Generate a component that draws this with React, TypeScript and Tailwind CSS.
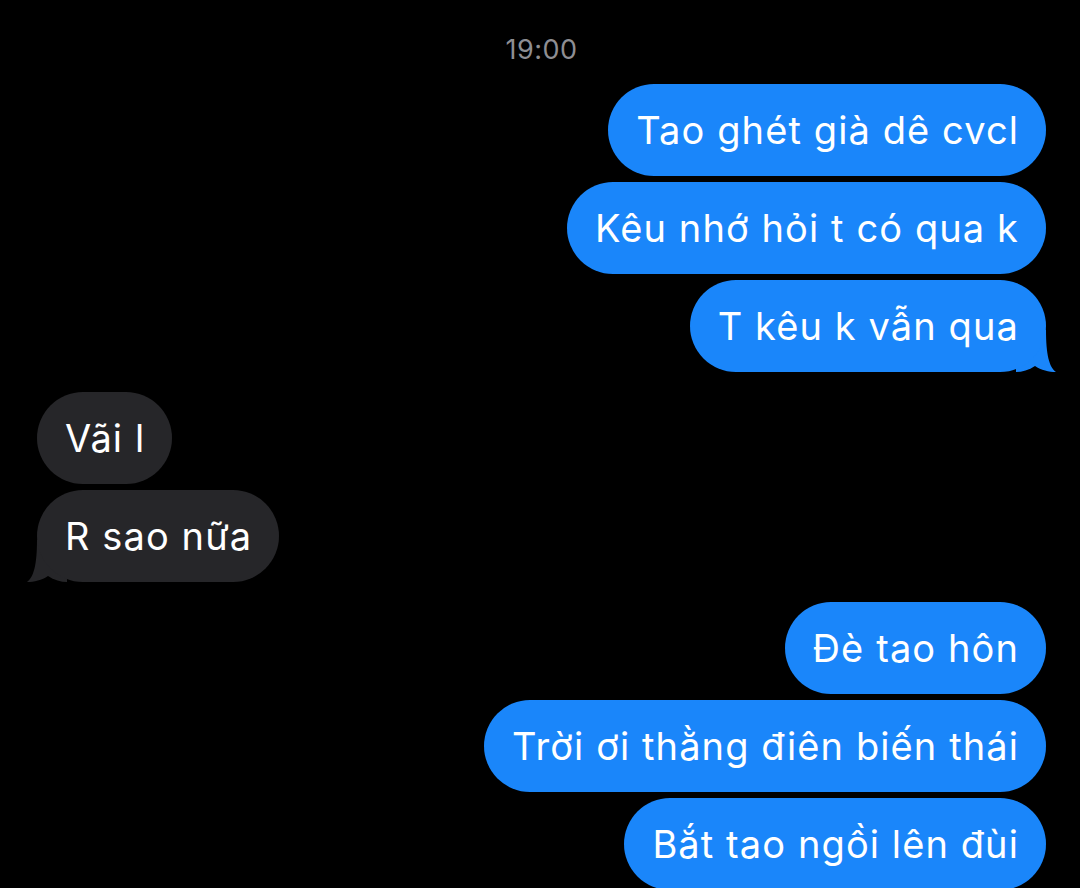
import React from "react";

type Msg = { text: string; tail?: boolean };

const BLUE = "#1a86fa";
const GRAY = "#262629";

// đuôi bong bóng kiểu iMessage
function Tail({ side, color }: { side: "left" | "right"; color: string }) {
  return (
    <svg
      width="42"
      height="42"
      viewBox="0 0 42 42"
      className={
        side === "right"
          ? "absolute bottom-0 -right-[12px]"
          : "absolute bottom-0 -left-[12px] -scale-x-100"
      }
    >
      <path d="M30 0 C30 24 33 37 40 42 C33 42 25 40 19 36 C13 40 6 42 0 42 L0 0 Z" fill={color} />
    </svg>
  );
}

function Bubble({ text, tail, side }: Msg & { side: "left" | "right" }) {
  const color = side === "right" ? BLUE : GRAY;
  return (
    <div className="relative">
      {tail && <Tail side={side} color={color} />}
      <div
        className={`relative rounded-[46px] pl-7 pr-[27px] py-6 text-[38px] leading-[44px] tracking-[1.1px] text-white ${
          side === "right" ? "bg-[#1a86fa]" : "bg-[#262629]"
        }`}
      >
        {text}
      </div>
    </div>
  );
}

function Group({ side, messages }: { side: "left" | "right"; messages: Msg[] }) {
  return (
    <div className={`flex flex-col gap-[6px] ${side === "right" ? "items-end" : "items-start"}`}>
      {messages.map((m, i) => (
        <Bubble key={i} {...m} side={side} />
      ))}
    </div>
  );
}

export default function App() {
  return (
    <div
      className="h-[888px] w-[1080px] overflow-hidden bg-black pl-[37px] pr-[34px] pt-[35px]"
      style={{ fontFamily: "Inter, 'Noto Sans', sans-serif" }}
    >
      <div className="text-center text-[27px] leading-[30px] tracking-[0.5px] text-[#8e8e93]">19:00</div>
      <div className="mt-[19px] flex flex-col gap-[20px]">
        <Group
          side="right"
          messages={[
            { text: "Tao ghét già dê cvcl" },
            { text: "Kêu nhớ hỏi t có qua k" },
            { text: "T kêu k vẫn qua", tail: true },
          ]}
        />
        <Group side="left" messages={[{ text: "Vãi l" }, { text: "R sao nữa", tail: true }]} />
        <Group
          side="right"
          messages={[
            { text: "Đè tao hôn" },
            { text: "Trời ơi thằng điên biến thái" },
            { text: "Bắt tao ngồi lên đùi" },
          ]}
        />
      </div>
    </div>
  );
}
